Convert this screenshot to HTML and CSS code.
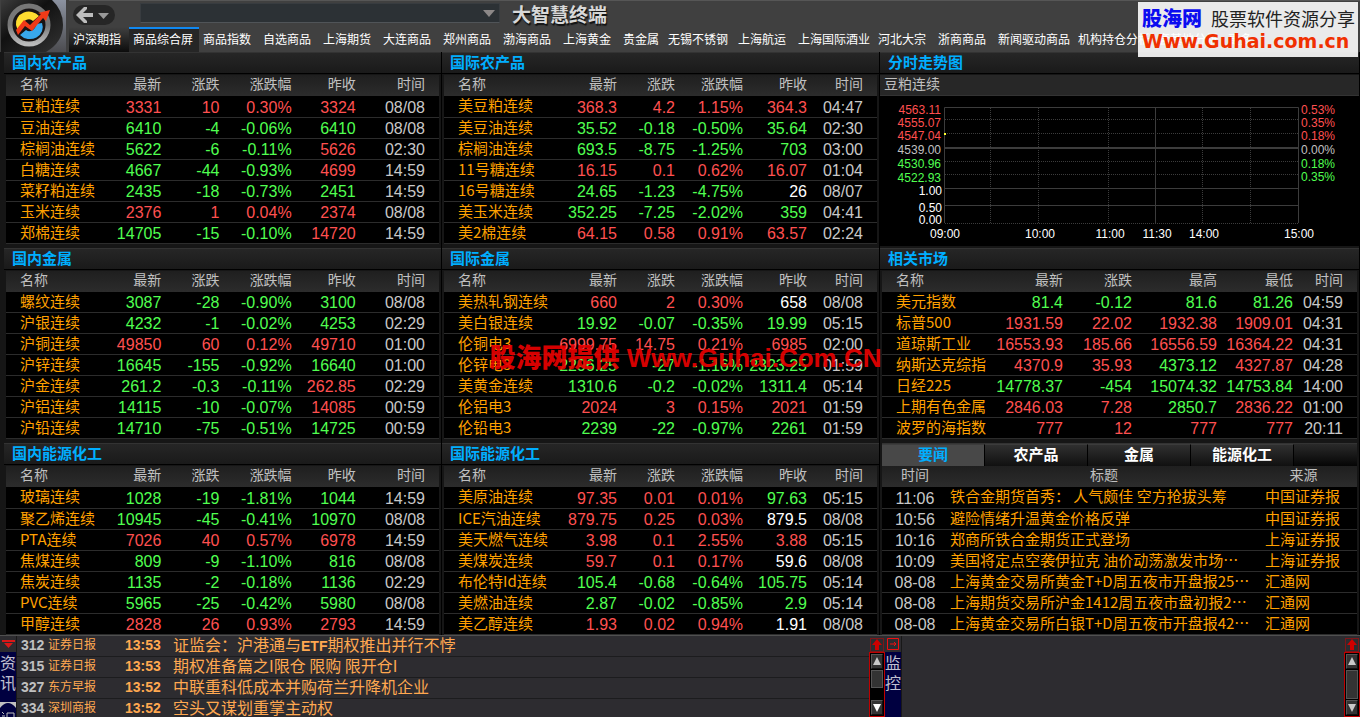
FILE: index.html
```html
<!DOCTYPE html>
<html lang="zh-CN">
<head>
<meta charset="utf-8">
<title>大智慧终端</title>
<link rel="stylesheet" href="styles.css">
</head>
<body>
<header class="top">
  <div class="logo">
    <svg viewBox="0 0 66 52" width="66" height="52" aria-hidden="true">
      <defs>
        <linearGradient id="lb" x1="0" y1="0" x2="1" y2="1"><stop offset="0" stop-color="#3c3c3c"/><stop offset=".4" stop-color="#111"/><stop offset="1" stop-color="#333"/></linearGradient>
        <linearGradient id="ring" x1="0" y1="0" x2="0" y2="1"><stop offset="0" stop-color="#777"/><stop offset=".5" stop-color="#777"/><stop offset="1" stop-color="#bbb"/></linearGradient>
        <linearGradient id="lg" x1="0" y1="0" x2="0" y2="1"><stop offset="0" stop-color="#8b92a0"/><stop offset="1" stop-color="#4c4c50"/></linearGradient>
      </defs>
      <rect x="1" width="65" height="52" fill="url(#lg)"/>
      <path d="M1 0H52Q63 10 63 25Q63 42 46 52H1Z" fill="url(#lb)"/>
      <circle cx="29" cy="25" r="19" fill="#181414" stroke="url(#ring)" stroke-width="5"/>
      <path d="M16 25A13 12 0 0 1 39 16L33 21Q30 18 26 20Q22 22 21 27L18 31Z" fill="#ffdc30"/>
      <path d="M42 23A13 12 0 0 1 20 35L26 30Q30 33 34 29Q36 27 36 24Z" fill="#38a8ec"/>
      <path d="M16 30L24 20L30 25L41 14L38 13L50 10L46 21L43 18L32 31L25 26L18 35Z" fill="#f03a18"/>
    </svg>
  </div>
  <div class="topmain">
    <div class="tools">
      <button class="back" type="button" aria-label="后退">
        <svg viewBox="0 0 42 20" width="42" height="20" aria-hidden="true"><path d="M3 10L11 2L14 2L14 4L10 8H20V12H10L14 16V18H11Z" fill="#bcbcbc"/><path d="M25 8H36L30.500 14Z" fill="#999"/></svg>
      </button>
      <span class="combo">
        <select aria-label="代码"><option></option></select>
        <svg viewBox="0 0 12 7" width="12" height="7" aria-hidden="true"><path d="M0 0H12L6 7Z" fill="#8c8888"/></svg>
      </span>
      <h1>大智慧终端</h1>
    </div>
    <nav class="nav">
      <a href="#" class="first">沪深期指</a><a href="#" class="w5 on">商品综合屏</a><a href="#">商品指数</a><a href="#">自选商品</a><a href="#">上海期货</a><a href="#">大连商品</a><a href="#">郑州商品</a><a href="#">渤海商品</a><a href="#">上海黄金</a><a href="#" class="w3">贵金属</a><a href="#" class="w5">无锡不锈钢</a><a href="#">上海航运</a><a href="#" class="w6">上海国际酒业</a><a href="#">河北大宗</a><a href="#">浙商商品</a><a href="#" class="w6">新闻驱动商品</a><a href="#" class="w6">机构持仓分析</a><a href="#" class="w5">套基地分析</a><a href="#">更多</a>
    </nav>
  </div>
  <div class="promo">
    <div class="promo-line"><b>股海网</b><span>股票软件资源分享</span></div>
    <div class="promo-url">Www.Guhai.com.cn</div>
  </div>
</header>

<main class="board">
  <section class="panel">
    <h2>国内农产品</h2>
    <table class="quotes qa">
      <colgroup><col><col><col><col><col><col></colgroup>
      <thead><tr><th>名称</th><th>最新</th><th>涨跌</th><th>涨跌幅</th><th>昨收</th><th>时间</th></tr></thead>
      <tbody>
        <tr class="up"><td>豆粕连续</td><td>3331</td><td>10</td><td>0.30%</td><td>3324</td><td>08/08</td></tr>
        <tr class="dn"><td>豆油连续</td><td>6410</td><td>-4</td><td>-0.06%</td><td>6410</td><td>08/08</td></tr>
        <tr class="dn"><td>棕榈油连续</td><td>5622</td><td>-6</td><td>-0.11%</td><td class="r">5626</td><td>02:30</td></tr>
        <tr class="dn"><td>白糖连续</td><td>4667</td><td>-44</td><td>-0.93%</td><td class="r">4699</td><td>14:59</td></tr>
        <tr class="dn"><td>菜籽粕连续</td><td>2435</td><td>-18</td><td>-0.73%</td><td>2451</td><td>14:59</td></tr>
        <tr class="up"><td>玉米连续</td><td>2376</td><td>1</td><td>0.04%</td><td>2374</td><td>08/08</td></tr>
        <tr class="dn"><td>郑棉连续</td><td>14705</td><td>-15</td><td>-0.10%</td><td class="r">14720</td><td>14:59</td></tr>
      </tbody>
    </table>
  </section>

  <section class="panel">
    <h2>国际农产品</h2>
    <table class="quotes qb">
      <colgroup><col><col><col><col><col><col></colgroup>
      <thead><tr><th>名称</th><th>最新</th><th>涨跌</th><th>涨跌幅</th><th>昨收</th><th>时间</th></tr></thead>
      <tbody>
        <tr class="up"><td>美豆粕连续</td><td>368.3</td><td>4.2</td><td>1.15%</td><td>364.3</td><td>04:47</td></tr>
        <tr class="dn"><td>美豆油连续</td><td>35.52</td><td>-0.18</td><td>-0.50%</td><td>35.64</td><td>02:30</td></tr>
        <tr class="dn"><td>棕榈油连续</td><td>693.5</td><td>-8.75</td><td>-1.25%</td><td>703</td><td>03:00</td></tr>
        <tr class="up"><td>11号糖连续</td><td>16.15</td><td>0.1</td><td>0.62%</td><td>16.07</td><td>01:04</td></tr>
        <tr class="dn"><td>16号糖连续</td><td>24.65</td><td>-1.23</td><td>-4.75%</td><td class="w">26</td><td>08/07</td></tr>
        <tr class="dn"><td>美玉米连续</td><td>352.25</td><td>-7.25</td><td>-2.02%</td><td>359</td><td>04:41</td></tr>
        <tr class="up"><td>美2棉连续</td><td>64.15</td><td>0.58</td><td>0.91%</td><td>63.57</td><td>02:24</td></tr>
      </tbody>
    </table>
  </section>

  <section class="panel side">
    <h2>分时走势图</h2>
    <div class="chart-name">豆粕连续</div>
    <svg class="chart" viewBox="0 0 479 150" role="img" aria-label="豆粕连续分时走势图">
      <g fill="none" stroke="#3c3c3c">
        <path d="M64.500 11.500H418.500V127M64.500 11.500V127M275.500 12V127M64 92.500H418M64 109.500H418"/>
        <path stroke-width="2" d="M64 52H418"/>
        <path stroke-dasharray="1 1" d="M65 23.500H418M65 37.500H418M65 65.500H418M65 78.500H418M65 127.500H418M110.500 12V127M158.500 12V127M228.500 12V127M322.500 12V127M370.500 12V127"/>
      </g>
      <rect x="64" y="37" width="2" height="2" fill="#ff3"/>
      <g text-anchor="end">
        <g class="c-up"><text x="61" y="18">4563.11</text><text x="61" y="31">4555.07</text><text x="61" y="44">4547.04</text></g>
        <text class="c-flat" x="61" y="58">4539.00</text>
        <g class="c-dn"><text x="61" y="72">4530.96</text><text x="61" y="86">4522.93</text></g>
        <text x="62" y="99">1.00</text><text x="62" y="116">0.50</text><text x="62" y="128">0.00</text>
      </g>
      <g class="c-up"><text x="421" y="18">0.53%</text><text x="421" y="31">0.35%</text><text x="421" y="44">0.18%</text></g>
      <text class="c-flat" x="421" y="58">0.00%</text>
      <g class="c-dn"><text x="421" y="72">0.18%</text><text x="421" y="85">0.35%</text></g>
      <g text-anchor="middle"><text x="65" y="142">09:00</text><text x="160" y="142">10:00</text><text x="230" y="142">11:00</text><text x="277" y="142">11:30</text><text x="324" y="142">14:00</text><text x="419" y="142">15:00</text></g>
    </svg>
  </section>

  <section class="panel">
    <h2>国内金属</h2>
    <table class="quotes qa">
      <colgroup><col><col><col><col><col><col></colgroup>
      <thead><tr><th>名称</th><th>最新</th><th>涨跌</th><th>涨跌幅</th><th>昨收</th><th>时间</th></tr></thead>
      <tbody>
        <tr class="dn"><td>螺纹连续</td><td>3087</td><td>-28</td><td>-0.90%</td><td>3100</td><td>08/08</td></tr>
        <tr class="dn"><td>沪银连续</td><td>4232</td><td>-1</td><td>-0.02%</td><td>4253</td><td>02:29</td></tr>
        <tr class="up"><td>沪铜连续</td><td>49850</td><td>60</td><td>0.12%</td><td>49710</td><td>01:00</td></tr>
        <tr class="dn"><td>沪锌连续</td><td>16645</td><td>-155</td><td>-0.92%</td><td>16640</td><td>01:00</td></tr>
        <tr class="dn"><td>沪金连续</td><td>261.2</td><td>-0.3</td><td>-0.11%</td><td class="r">262.85</td><td>02:29</td></tr>
        <tr class="dn"><td>沪铝连续</td><td>14115</td><td>-10</td><td>-0.07%</td><td class="r">14085</td><td>00:59</td></tr>
        <tr class="dn"><td>沪铅连续</td><td>14710</td><td>-75</td><td>-0.51%</td><td>14725</td><td>00:59</td></tr>
      </tbody>
    </table>
  </section>

  <section class="panel">
    <h2>国际金属</h2>
    <table class="quotes qb">
      <colgroup><col><col><col><col><col><col></colgroup>
      <thead><tr><th>名称</th><th>最新</th><th>涨跌</th><th>涨跌幅</th><th>昨收</th><th>时间</th></tr></thead>
      <tbody>
        <tr class="up"><td>美热轧钢连续</td><td>660</td><td>2</td><td>0.30%</td><td class="w">658</td><td>08/08</td></tr>
        <tr class="dn"><td>美白银连续</td><td>19.92</td><td>-0.07</td><td>-0.35%</td><td>19.99</td><td>05:15</td></tr>
        <tr class="up"><td>伦铜电3</td><td>6999.75</td><td>14.75</td><td>0.21%</td><td>6985</td><td>02:00</td></tr>
        <tr class="dn"><td>伦锌电3</td><td>2296.25</td><td>-27</td><td>-1.16%</td><td>2323.25</td><td>01:59</td></tr>
        <tr class="dn"><td>美黄金连续</td><td>1310.6</td><td>-0.2</td><td>-0.02%</td><td>1311.4</td><td>05:14</td></tr>
        <tr class="up"><td>伦铝电3</td><td>2024</td><td>3</td><td>0.15%</td><td>2021</td><td>01:59</td></tr>
        <tr class="dn"><td>伦铅电3</td><td>2239</td><td>-22</td><td>-0.97%</td><td>2261</td><td>01:59</td></tr>
      </tbody>
    </table>
  </section>

  <section class="panel side">
    <h2>相关市场</h2>
    <table class="quotes qc">
      <colgroup><col><col><col><col><col><col></colgroup>
      <thead><tr><th>名称</th><th>最新</th><th>涨跌</th><th>最高</th><th>最低</th><th>时间</th></tr></thead>
      <tbody>
        <tr class="dn"><td>美元指数</td><td>81.4</td><td>-0.12</td><td>81.6</td><td>81.26</td><td>04:59</td></tr>
        <tr class="up"><td>标普500</td><td>1931.59</td><td>22.02</td><td>1932.38</td><td>1909.01</td><td>04:31</td></tr>
        <tr class="up"><td>道琼斯工业</td><td>16553.93</td><td>185.66</td><td>16556.59</td><td>16364.22</td><td>04:31</td></tr>
        <tr class="up"><td>纳斯达克综指</td><td>4370.9</td><td>35.93</td><td class="g">4373.12</td><td>4327.87</td><td>04:28</td></tr>
        <tr class="dn"><td>日经225</td><td>14778.37</td><td>-454</td><td>15074.32</td><td>14753.84</td><td>14:00</td></tr>
        <tr class="up"><td>上期有色金属</td><td>2846.03</td><td>7.28</td><td class="g">2850.7</td><td>2836.22</td><td>01:00</td></tr>
        <tr class="up"><td>波罗的海指数</td><td>777</td><td>12</td><td>777</td><td>777</td><td>20:11</td></tr>
      </tbody>
    </table>
  </section>

  <section class="panel last">
    <h2>国内能源化工</h2>
    <table class="quotes qa">
      <colgroup><col><col><col><col><col><col></colgroup>
      <thead><tr><th>名称</th><th>最新</th><th>涨跌</th><th>涨跌幅</th><th>昨收</th><th>时间</th></tr></thead>
      <tbody>
        <tr class="dn"><td>玻璃连续</td><td>1028</td><td>-19</td><td>-1.81%</td><td>1044</td><td>14:59</td></tr>
        <tr class="dn"><td>聚乙烯连续</td><td>10945</td><td>-45</td><td>-0.41%</td><td>10970</td><td>08/08</td></tr>
        <tr class="up"><td>PTA连续</td><td>7026</td><td>40</td><td>0.57%</td><td>6978</td><td>14:59</td></tr>
        <tr class="dn"><td>焦煤连续</td><td>809</td><td>-9</td><td>-1.10%</td><td>816</td><td>08/08</td></tr>
        <tr class="dn"><td>焦炭连续</td><td>1135</td><td>-2</td><td>-0.18%</td><td>1136</td><td>02:29</td></tr>
        <tr class="dn"><td>PVC连续</td><td>5965</td><td>-25</td><td>-0.42%</td><td>5980</td><td>08/08</td></tr>
        <tr class="up"><td>甲醇连续</td><td>2828</td><td>26</td><td>0.93%</td><td>2793</td><td>14:59</td></tr>
      </tbody>
    </table>
  </section>

  <section class="panel last">
    <h2>国际能源化工</h2>
    <table class="quotes qb">
      <colgroup><col><col><col><col><col><col></colgroup>
      <thead><tr><th>名称</th><th>最新</th><th>涨跌</th><th>涨跌幅</th><th>昨收</th><th>时间</th></tr></thead>
      <tbody>
        <tr class="up"><td>美原油连续</td><td>97.35</td><td>0.01</td><td>0.01%</td><td class="g">97.63</td><td>05:15</td></tr>
        <tr class="up"><td>ICE汽油连续</td><td>879.75</td><td>0.25</td><td>0.03%</td><td class="w">879.5</td><td>08/08</td></tr>
        <tr class="up"><td>美天燃气连续</td><td>3.98</td><td>0.1</td><td>2.55%</td><td>3.88</td><td>05:15</td></tr>
        <tr class="up"><td>美煤炭连续</td><td>59.7</td><td>0.1</td><td>0.17%</td><td class="w">59.6</td><td>08/08</td></tr>
        <tr class="dn"><td>布伦特Id连续</td><td>105.4</td><td>-0.68</td><td>-0.64%</td><td>105.75</td><td>05:14</td></tr>
        <tr class="dn"><td>美燃油连续</td><td>2.87</td><td>-0.02</td><td>-0.85%</td><td>2.9</td><td>05:14</td></tr>
        <tr class="up"><td>美乙醇连续</td><td>1.93</td><td>0.02</td><td>0.94%</td><td class="w">1.91</td><td>08/08</td></tr>
      </tbody>
    </table>
  </section>

  <section class="panel side last">
    <div class="news-tabs">
      <button type="button" class="on">要闻</button><button type="button">农产品</button><button type="button">金属</button><button type="button">能源化工</button>
    </div>
    <table class="quotes news">
      <colgroup><col><col><col></colgroup>
      <thead><tr><th>时间</th><th>标题</th><th>来源</th></tr></thead>
      <tbody>
        <tr><td>11:06</td><td>铁合金期货首秀： 人气颇佳 空方抢拔头筹</td><td>中国证券报</td></tr>
        <tr><td>10:56</td><td>避险情绪升温黄金价格反弹</td><td>中国证券报</td></tr>
        <tr><td>10:16</td><td>郑商所铁合金期货正式登场</td><td>上海证券报</td></tr>
        <tr><td>10:09</td><td>美国将定点空袭伊拉克 油价动荡激发市场…</td><td>上海证券报</td></tr>
        <tr><td>08-08</td><td>上海黄金交易所黄金T+D周五夜市开盘报25…</td><td>汇通网</td></tr>
        <tr><td>08-08</td><td>上海期货交易所沪金1412周五夜市盘初报2…</td><td>汇通网</td></tr>
        <tr><td>08-08</td><td>上海黄金交易所白银T+D周五夜市开盘报42…</td><td>汇通网</td></tr>
      </tbody>
    </table>
  </section>
  <div class="stamp">股海网提供 Www.Guhai.Com.CN</div>
</main>

<footer class="feed">
  <div class="feed-left">
    <div class="strip">
      <button type="button" class="ico" aria-label="收起"><svg viewBox="0 0 16 16" width="16" height="16" aria-hidden="true"><path d="M2 4H15V6H2ZM4 7H13L8.500 12Z" fill="#d81818"/></svg></button>
      <div class="vtab"><span>资</span><span>讯</span><svg viewBox="0 0 16 16" width="16" height="16" aria-hidden="true"><path d="M0 1H16V7Q12 2 8 2Q4 2 0 7Z" fill="#bfbfbf"/><path d="M2 11L4 13M7 12H14V16M7 12V16M2 15H5" stroke="#bfbfbf" fill="none"/></svg></div>
    </div>
    <ul class="lines">
      <li><b>312</b><span class="src">证券日报</span><time>13:53</time><a href="#">证监会：沪港通与<strong>ETF</strong>期权推出并行不悖</a></li>
      <li><b>315</b><span class="src">证券日报</span><time>13:53</time><a href="#">期权准备篇之I限仓 限购 限开仓I</a></li>
      <li><b>327</b><span class="src">东方早报</span><time>13:52</time><a href="#">中联重科低成本并购荷兰升降机企业</a></li>
      <li><b>334</b><span class="src">深圳商报</span><time>13:52</time><a href="#">空头又谋划重掌主动权</a></li>
    </ul>
    <div class="scroll">
      <svg class="pin" viewBox="0 0 14 14" width="14" height="14" aria-hidden="true"><rect x=".5" y=".5" width="13" height="13" fill="none" stroke="#d00000" stroke-dasharray="1 1"/><path d="M7 1L12 7H9V12H5V7H2Z" fill="#d00000"/></svg>
      <div class="track">
        <button type="button" aria-label="向上"><svg viewBox="0 0 8 8" width="8" height="8" aria-hidden="true"><path d="M4 0L8 8H0Z" fill="#c8c8c8"/></svg></button>
        <span class="thumb"></span>
        <button type="button" aria-label="向下"><svg viewBox="0 0 8 8" width="8" height="8" aria-hidden="true"><path d="M0 0H8L4 8Z" fill="#fff"/></svg></button>
      </div>
    </div>
  </div>
  <div class="feed-right">
    <div class="strip">
      <button type="button" class="ico" aria-label="展开"><svg viewBox="0 0 16 16" width="16" height="16" aria-hidden="true"><path d="M2.500 2.500H13.500V13.500H2.500ZM5 8H11M9 6L11 8L9 10" fill="none" stroke="#f01010"/></svg></button>
      <div class="vtab"><span>监</span><span>控</span></div>
    </div>
    <div class="empty"></div>
    <div class="scroll">
      <svg class="pin" viewBox="0 0 14 14" width="14" height="14" aria-hidden="true"><rect x=".5" y=".5" width="13" height="13" fill="none" stroke="#d00000" stroke-dasharray="1 1"/><path d="M7 1L12 7H9V12H5V7H2Z" fill="#d00000"/></svg>
      <div class="track">
        <button type="button" aria-label="向上"><svg viewBox="0 0 8 8" width="8" height="8" aria-hidden="true"><path d="M4 0L8 8H0Z" fill="#c8c8c8"/></svg></button>
        <span class="thumb full"></span>
        <button type="button" aria-label="向下"><svg viewBox="0 0 8 8" width="8" height="8" aria-hidden="true"><path d="M0 0H8L4 8Z" fill="#c8c8c8"/></svg></button>
      </div>
    </div>
  </div>
</footer>
</body>
</html>
```
FILE: styles.css
```css
:root {
  --cjk: "Noto Sans CJK SC", sans-serif;
  --num: "Liberation Sans", "Noto Sans CJK SC", sans-serif;
  --up: #ff5050;
  --down: #50ff50;
  --name: #ffa000;
  --title: #00aeff;
}
* { box-sizing: border-box; }
body {
  margin: 0;
  height: 100vh;
  overflow: hidden;
  display: flex;
  flex-direction: column;
  background: #000;
  font-family: var(--cjk);
  color: #c0c0c0;
}
button { padding: 0; border: 0; background: none; font: inherit; color: inherit; }
a { color: inherit; text-decoration: none; }

/* top bar */
.top {
  position: relative;
  flex: none;
  display: flex;
  height: 52px;
  background: #404040;
}
.logo { width: 69px; flex: none; }
.logo svg, .back svg { display: block; }
.topmain { flex: 1; min-width: 0; border-top: 1px solid #565656; }
.tools { display: flex; height: 26px; align-items: center; padding: 0 0 0 4px; }
.back { width: 42px; height: 20px; border-radius: 10px; background: #262626; margin: 2px 25px 0 0; }
.combo { position: relative; width: 360px; height: 20px; margin-bottom: 2px; }
.combo select {
  display: block;
  appearance: none;
  width: 100%;
  height: 100%;
  border: 1px solid #383c40;
  border-bottom-color: #505458;
  border-radius: 0;
  background: #2c3135;
}
.combo svg { position: absolute; right: 5px; top: 7px; }
.tools h1 {
  margin: 0 0 0 12px;
  font-size: 19px;
  line-height: 22px;
  font-weight: 700;
  color: #d8d8d8;
  text-shadow: 1px 2px 1px #111;
}
.nav { display: flex; height: 25px; overflow: hidden; }
.nav a {
  flex: none;
  width: 60px;
  padding-left: 4px;
  font-size: 12px;
  line-height: 23px;
  color: #fff;
  white-space: nowrap;
}
.nav .w3 { width: 45px; }
.nav .w5 { width: 70px; }
.nav .w6 { width: 80px; }
.nav .first { background: linear-gradient(#404040, #0c0c0c); }
.nav .on { background: #262626; box-shadow: inset 0 2px #1088f0; }

.promo {
  position: absolute;
  right: 2px;
  top: 2px;
  width: 220px;
  height: 55px;
  padding: 3px 3px 0 4px;
  background: rgba(255, 255, 255, .89);
  white-space: nowrap;
  z-index: 2;
}
.promo-line { display: flex; justify-content: space-between; line-height: 26px; font-size: 18px; color: #222; }
.promo-line b { font-size: 20px; font-weight: 900; color: #0c0cf0; }
.promo-url { font: bold 19px/20px "DejaVu Sans", sans-serif; color: #f03000; }

/* quote board */
.board {
  position: relative;
  flex: none;
  display: grid;
  grid-template-columns: 442fr 438fr 480fr;
  background: #161616;
}
.panel { min-width: 0; padding: 0 2px 4px 2px; background: #161616; border-right: 1px solid #000; }
.panel:nth-child(3n + 1) { padding-left: 6px; }
.panel.last { padding-bottom: 0; }
.panel h2 {
  margin: 0 -2px 1px;
  padding-left: 8px;
  height: 22px;
  font-size: 15px;
  line-height: 18px;
  font-weight: 700;
  color: var(--title);
  background: linear-gradient(#262626, #1a1a1a);
  border-top: 1px solid #333;
  border-bottom: 1px solid #000;
}
.quotes {
  width: 100%;
  table-layout: fixed;
  border-collapse: collapse;
  background: #000;
  font-family: var(--num);
  white-space: nowrap;
}
.quotes th {
  height: 21px;
  padding: 0;
  font: 400 14px/16px var(--cjk);
  text-align: right;
  vertical-align: top;
}
.quotes thead { background: linear-gradient(#1f1f1f, #2c2c2c); }
.quotes td {
  height: 21px;
  padding: 2px 0 0;
  font-size: 16px;
  line-height: 18px;
  text-align: right;
  vertical-align: bottom;
  border-bottom: 1px solid #2c2c2c;
}
.quotes th:first-child, .quotes td:first-child { text-align: left; padding-left: 14px; }
.quotes td:first-child { font: 15px/18px var(--cjk); color: var(--name); vertical-align: top; padding-top: 0; }
.up td { color: var(--up); }
.dn td { color: var(--down); }
.quotes .r { color: var(--up); }
.quotes .g { color: var(--down); }
.quotes .w { color: #fff; }
.quotes td:last-child { color: #c8c8c8; }
.quotes th:last-child, .quotes td:last-child { padding-right: 14px; }
.qa col:nth-child(1) { width: 99px; }
.qa col:nth-child(2) { width: 56px; }
.qa col:nth-child(3) { width: 58px; }
.qa col:nth-child(4) { width: 72px; }
.qa col:nth-child(5) { width: 64px; }
.qa col:nth-child(6) { width: 83px; }
.qb col:nth-child(1) { width: 108px; }
.qb col:nth-child(2) { width: 65px; }
.qb col:nth-child(3) { width: 58px; }
.qb col:nth-child(4) { width: 68px; }
.qb col:nth-child(5) { width: 64px; }
.qb col:nth-child(6) { width: 70px; }
.qc col:nth-child(1) { width: 105px; }
.qc col:nth-child(2) { width: 76px; }
.qc col:nth-child(3) { width: 69px; }
.qc col:nth-child(4) { width: 85px; }
.qc col:nth-child(5) { width: 76px; }
.qc col:nth-child(6) { width: 64px; }

/* intraday chart */
.chart-name { margin: 0 -2px; padding-left: 4px; height: 21px; font-size: 14px; line-height: 16px; background: #272727; border-bottom: 1px solid #333; }
.chart { display: block; width: calc(100% + 4px); margin: 0 -2px -4px; background: #000; }
.chart text { font: 12px "Liberation Sans", sans-serif; fill: #fff; }
.chart .c-up text { fill: var(--up); }
.chart .c-dn text { fill: var(--down); }
.chart .c-flat { fill: #c0c0c0; }

/* news */
.news-tabs { display: flex; height: 23px; background: linear-gradient(#2a2a2a, #050505); border-top: 1px solid #333; }
.news-tabs button {
  width: 103px;
  font-size: 15px;
  line-height: 18px;
  padding-bottom: 3px;
  font-weight: 700;
  color: #fff;
  background: linear-gradient(#303030, #101010);
  border-right: 1px solid #000;
  border-top: 1px solid #3c3c3c;
}
.news-tabs .on { background: #484848; color: var(--title); }
.news col:nth-child(1) { width: 66px; }
.news col:nth-child(2) { width: 312px; }
.news col:nth-child(3) { width: 97px; }
.quotes.news th { text-align: center; }
.quotes.news th:first-child { padding: 0; text-align: center; }
.quotes.news td { font: 15px/18px var(--cjk); color: var(--name); text-align: left; padding: 0 0 0 2px; vertical-align: top; }
.quotes.news td:first-child { font: 16px/18px var(--num); color: #c8c8c8; text-align: center; padding: 2px 0 0; vertical-align: bottom; }
.quotes.news td:last-child { padding: 0 0 0 5px; }
.quotes.news th:last-child { padding-right: 10px; }

.stamp {
  position: absolute;
  left: 36%;
  top: 290px;
  font: 900 26px/32px "Liberation Sans", "Noto Sans CJK SC", sans-serif;
  color: rgba(236, 0, 0, .93);
  white-space: nowrap;
  pointer-events: none;
}

/* bottom feed */
.feed {
  flex: 1;
  min-height: 0;
  display: grid;
  grid-template-columns: 885fr 475fr;
  grid-template-rows: 100%;
  border-top: 1px solid #505050;
  background: #2d2c30;
}
.feed-left, .feed-right { display: flex; min-width: 0; height: 100%; overflow: hidden; }
.strip { flex: none; width: 17px; border-right: 1px solid #181818; display: flex; flex-direction: column; }
.ico { flex: none; height: 16px; }
.ico svg, .pin, .vtab svg { display: block; }
.vtab { flex: 1; min-height: 0; display: flex; flex-direction: column; background: #000040; overflow: hidden; }
.vtab span { flex: none; font-size: 16px; line-height: 20px; color: #c0c0d0; }
.vtab svg { margin-top: 9px; flex: none; }
.lines { flex: 1; min-width: 0; margin: 0; padding: 0; list-style: none; }
.lines li {
  display: flex;
  height: 21px;
  padding-left: 4px;
  line-height: 16px;
  border-bottom: 1px solid #1c1c1e;
  color: #ffa850;
  white-space: nowrap;
}
.lines li:last-child { height: 18px; border-bottom: 0; }
.lines b { width: 27px; font: 700 14px/18px "Liberation Sans", sans-serif; color: #c0c0c0; }
.lines .src { width: 77px; font-size: 12px; }
.lines time { width: 48px; font: 700 14px/18px "Liberation Sans", sans-serif; }
.lines a { font-size: 16px; }
.lines strong { font: 700 14px/16px "Liberation Sans", sans-serif; }
.scroll { flex: none; width: 16px; display: flex; flex-direction: column; align-items: center; padding-top: 2px; }
.pin { flex: none; }
.track { flex: 1; min-height: 0; width: 16px; display: flex; flex-direction: column; border: 1px solid #c00000; padding: 1px; background: #000; }
.track button { flex: none; height: 15px; display: grid; place-items: center; background: #333; border: 1px solid #555; border-right-color: #111; border-bottom-color: #111; }
.track button:last-child { margin-top: auto; }
.thumb { height: 18px; margin: 1px 0; background: #333; border: 1px solid #555; }
.thumb.full { height: auto; flex: 1; }
.empty { flex: 1; }
```
